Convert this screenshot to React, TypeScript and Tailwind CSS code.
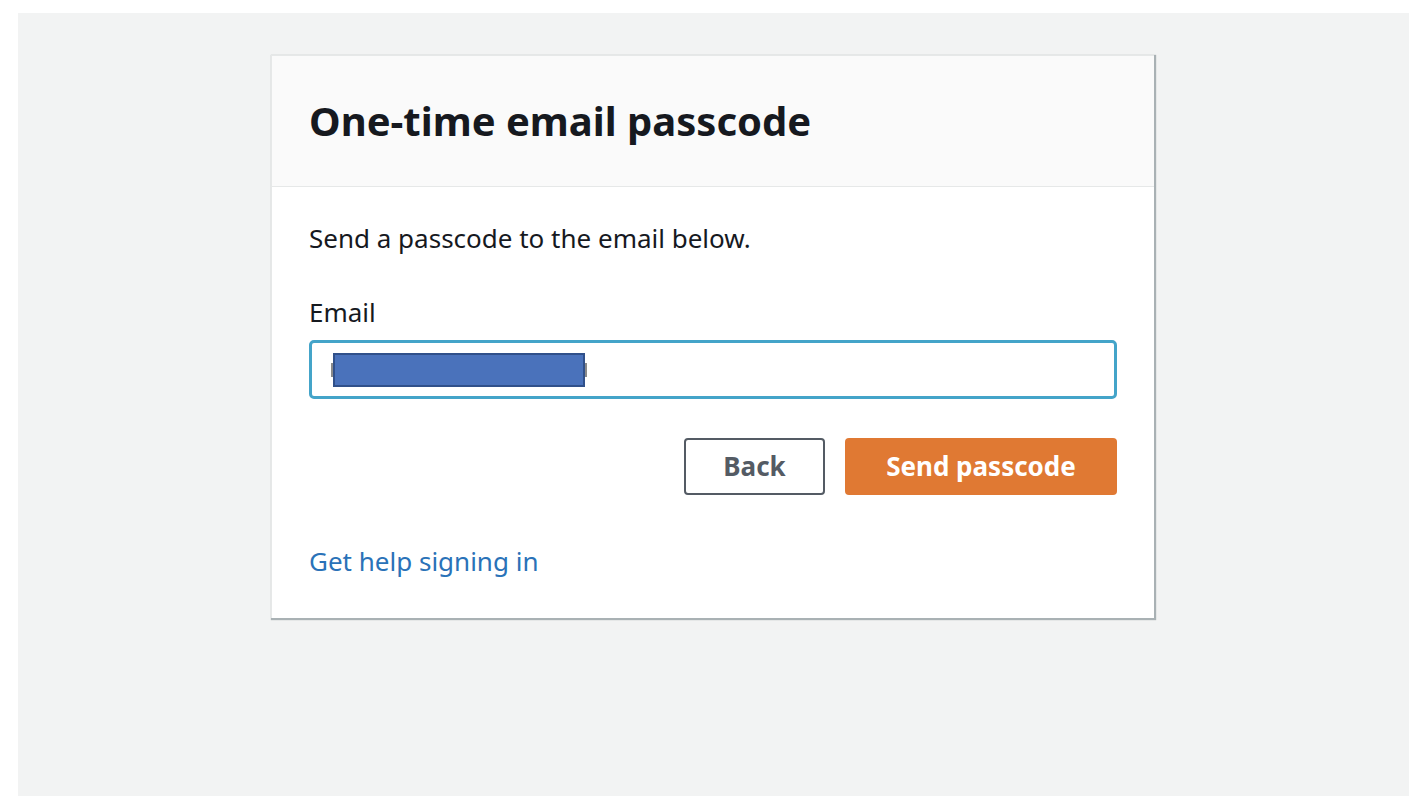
import React from "react";

export default function App() {
  return (
    <div className="min-h-[802px] bg-white pl-[18px] pt-[13px]" style={{ fontFamily: '"Noto Sans", "Open Sans", sans-serif' }}>
      <div className="w-[1391px] h-[783px] bg-[#f2f3f3] pt-[42px]">
        <div className="ml-[253px] w-[883px] bg-white shadow-[1px_1px_1px_1px_rgba(0,28,36,0.3)] border-t border-l border-[#e6e8e8]">
          <div className="h-[131px] bg-[#fafafa] border-b border-[#e6e8e8] flex items-center pl-[37px]">
            <h1 className="text-[40px] font-bold text-[#16191f]">One-time email passcode</h1>
          </div>
          <div className="px-[37px] pt-[34px] pb-[40px]">
            <p className="text-[26px] text-[#16191f] leading-[34px]">Send a passcode to the email below.</p>
            <label className="block mt-[40px] text-[26px] text-[#16191f] leading-[34px]">Email</label>
            <div className="mt-[11px] h-[59px] border-[3px] border-[#44a4c9] rounded-[5px] flex items-center pl-[19px]">
              <div className="relative flex items-center">
                <div className="w-[2px] h-[14px] bg-[#8a8a8a]" />
                <div className="w-[252px] h-[34px] bg-[#4a72bb] border-2 border-[#30508a]" />
                <div className="w-[2px] h-[14px] bg-[#8a8a8a]" />
              </div>
            </div>
            <div className="mt-[39px] flex justify-end gap-[20px]">
              <button className="w-[141px] h-[57px] border-2 border-[#545b64] rounded-[4px] text-[26px] font-bold text-[#545b64] bg-white">Back</button>
              <button className="w-[272px] h-[57px] rounded-[4px] text-[26px] font-bold text-white bg-[#e07933]">Send passcode</button>
            </div>
            <a className="block mt-[49px] text-[26px] text-[#2a72b8] leading-[34px]">Get help signing in</a>
          </div>
        </div>
      </div>
    </div>
  );
}
